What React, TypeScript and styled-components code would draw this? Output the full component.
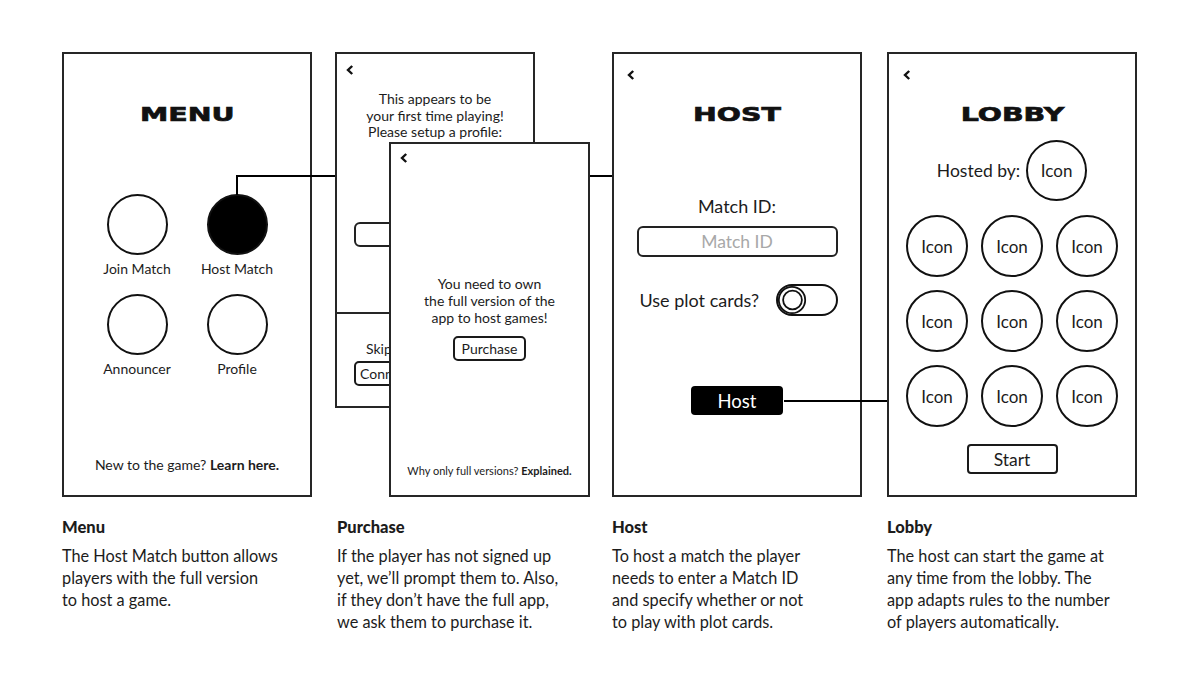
import React from 'react';
import styled, { createGlobalStyle } from 'styled-components';

const ink = '#1c1c1c';
const border = '#262626';

const GlobalStyle = createGlobalStyle`
  body {
    margin: 0;
    background: #ffffff;
    font-family: Lato, 'Open Sans', sans-serif;
    color: ${ink};
  }
`;

const Page = styled.div`
  position: relative;
  width: 1200px;
  height: 700px;
  box-sizing: border-box;
  padding: 52px 0 0 62px;
  overflow: hidden;
`;

const Row = styled.div`
  display: flex;
  gap: 25px;
`;

const Column = styled.div`
  display: flex;
  flex-direction: column;
  width: 250px;
`;

const Phone = styled.div<{ $w?: number; $h?: number }>`
  position: relative;
  box-sizing: border-box;
  width: ${(p) => p.$w ?? 250}px;
  height: ${(p) => p.$h ?? 445}px;
  border: 2px solid ${border};
  background: #fff;
  display: flex;
  flex-direction: column;
  align-items: center;
`;

const Stack = styled.div`
  position: relative;
  z-index: 2;
  width: 250px;
  height: 445px;
`;

const BackPhone = styled(Phone)`
  margin-left: -2px;
`;

const FrontPhone = styled(Phone)`
  position: absolute;
  left: 52px;
  top: 90px;
`;

const Back = styled.svg<{ $top: number; $left: number }>`
  align-self: flex-start;
  display: block;
  margin: ${(p) => p.$top}px 0 0 ${(p) => p.$left}px;
  flex-shrink: 0;
`;

const Title = styled.div<{ $mt: number }>`
  margin-top: ${(p) => p.$mt}px;
  height: 24px;
  line-height: 24px;
  font-family: 'DejaVu Sans', sans-serif;
  font-weight: 700;
  font-size: 20px;
  color: #111;
  -webkit-text-stroke: 0.7px #111;
  transform: scaleX(1.42);
`;

const IconGrid = styled.div`
  margin-top: 68px;
  display: grid;
  grid-template-columns: 100px 100px;
  row-gap: 17px;
`;

const MenuItem = styled.div`
  display: flex;
  flex-direction: column;
  align-items: center;
`;

const Circle = styled.div<{ $filled?: boolean; $size?: number }>`
  box-sizing: border-box;
  width: ${(p) => p.$size ?? 61}px;
  height: ${(p) => p.$size ?? 61}px;
  border-radius: 50%;
  border: 2px solid #111;
  background: ${(p) => (p.$filled ? '#000' : '#fff')};
  display: flex;
  align-items: center;
  justify-content: center;
  font-size: 17px;
  flex-shrink: 0;
`;

const ItemLabel = styled.div`
  margin-top: 6px;
  font-size: 14px;
  line-height: 16px;
  white-space: nowrap;
`;

const Footnote = styled.div<{ $size: number; $pb: number }>`
  margin-top: auto;
  padding-bottom: ${(p) => p.$pb}px;
  font-size: ${(p) => p.$size}px;
  line-height: ${(p) => p.$size + 3}px;
  white-space: nowrap;
  b {
    font-weight: 700;
  }
`;

const Message = styled.div<{ $mt: number; $lh: number }>`
  margin-top: ${(p) => p.$mt}px;
  font-size: 14px;
  line-height: ${(p) => p.$lh}px;
  text-align: center;
  white-space: nowrap;
`;

const FieldBox = styled.div`
  align-self: flex-start;
  margin: 81px 0 0 17px;
  box-sizing: border-box;
  width: 166px;
  height: 25px;
  border: 2px solid #222;
  border-radius: 6px;
`;

const SetupFooter = styled.div`
  margin-top: 65px;
  align-self: stretch;
  border-top: 2px solid ${border};
  padding: 26px 0 0 17px;
  display: flex;
  flex-direction: column;
  align-items: flex-start;
  gap: 4px;
  font-size: 14px;
  line-height: 17px;
`;

const SkipText = styled.div`
  padding-left: 12px;
  white-space: nowrap;
`;

const OutlineButton = styled.div<{ $w: number; $h: number; $mt?: number }>`
  box-sizing: border-box;
  margin-top: ${(p) => p.$mt ?? 0}px;
  width: ${(p) => p.$w}px;
  height: ${(p) => p.$h}px;
  border: 2px solid #1a1a1a;
  border-radius: 5px;
  display: flex;
  align-items: center;
  justify-content: center;
  white-space: nowrap;
`;

const SmallButton = styled(OutlineButton)`
  font-size: 14px;
`;

const LeftButton = styled(OutlineButton)`
  justify-content: flex-start;
  padding-left: 4px;
  font-size: 14px;
`;

const FieldLabel = styled.div`
  margin-top: 70px;
  font-size: 18px;
  line-height: 20px;
`;

const TextInput = styled.div`
  margin-top: 10px;
  box-sizing: border-box;
  width: 201px;
  height: 31px;
  border: 2px solid #222;
  border-radius: 6px;
  display: flex;
  align-items: center;
  justify-content: center;
  font-size: 17.5px;
  color: #a8a8a8;
`;

const ToggleRow = styled.div`
  margin-top: 27px;
  width: 201px;
  padding-left: 3px;
  box-sizing: border-box;
  height: 31px;
  display: flex;
  align-items: center;
  justify-content: space-between;
  font-size: 18px;
`;

const PrimaryButton = styled.div`
  margin-top: 71px;
  width: 92px;
  height: 29px;
  border-radius: 4px;
  background: #000;
  color: #fff;
  font-size: 18.5px;
  display: flex;
  align-items: center;
  justify-content: center;
`;

const HostedRow = styled.div`
  margin-top: 14px;
  display: flex;
  align-items: center;
  gap: 6px;
  font-size: 17.5px;
`;

const PlayerGrid = styled.div`
  margin-top: 14px;
  display: grid;
  grid-template-columns: repeat(3, 62px);
  gap: 13px;
`;

const StartButton = styled(OutlineButton)`
  font-size: 17.5px;
  border-radius: 4px;
`;

const Caption = styled.div`
  margin-top: 21px;
`;

const CaptionTitle = styled.div`
  font-size: 16.5px;
  line-height: 18px;
  font-weight: 900;
`;

const CaptionBody = styled.div`
  margin-top: 9px;
  font-size: 16.3px;
  line-height: 22px;
  white-space: nowrap;
`;

const Connectors = styled.svg`
  position: absolute;
  left: 0;
  top: 0;
  z-index: 1;
  pointer-events: none;
`;

const Chevron = ({ top, left }: { top: number; left: number }) => (
  <Back $top={top} $left={left} width="8" height="10" viewBox="0 0 8 10">
    <polyline points="6.2,1 2,5 6.2,9" fill="none" stroke="#111" strokeWidth="2.4" />
  </Back>
);

const Toggle = () => (
  <svg width="62" height="32" viewBox="0 0 62 32">
    <rect x="1" y="1" width="60" height="30" rx="15" fill="#fff" stroke="#111" strokeWidth="2" />
    <circle cx="16" cy="16" r="13.2" fill="none" stroke="#111" strokeWidth="1.8" />
    <circle cx="16.5" cy="16" r="9.4" fill="none" stroke="#111" strokeWidth="1.8" />
  </svg>
);

const captions = [
  { title: 'Menu', lines: ['The Host Match button allows', 'players with the full version', 'to host a game.'] },
  {
    title: 'Purchase',
    lines: ['If the player has not signed up', 'yet, we\u2019ll prompt them to. Also,', 'if they don\u2019t have the full app,', 'we ask them to purchase it.'],
  },
  {
    title: 'Host',
    lines: ['To host a match the player', 'needs to enter a Match ID', 'and specify whether or not', 'to play with plot cards.'],
  },
  {
    title: 'Lobby',
    lines: ['The host can start the game at', 'any time from the lobby. The', 'app adapts rules to the number', 'of players automatically.'],
  },
];

const CaptionBlock = ({ index }: { index: number }) => (
  <Caption>
    <CaptionTitle>{captions[index].title}</CaptionTitle>
    <CaptionBody>
      {captions[index].lines.map((l) => (
        <div key={l}>{l}</div>
      ))}
    </CaptionBody>
  </Caption>
);

const menuItems = [
  { label: 'Join Match' },
  { label: 'Host Match', active: true },
  { label: 'Announcer' },
  { label: 'Profile' },
];

const App = () => {
  return (
    <>
      <GlobalStyle />
      <Page>
        <Connectors width="1200" height="700" viewBox="0 0 1200 700">
          <polyline points="237,195 237,176 612,176" fill="none" stroke="#000" strokeWidth="2" />
          <line x1="784" y1="401" x2="887" y2="401" stroke="#000" strokeWidth="2" />
        </Connectors>
        <Row>
          <Column>
            <Phone>
              <Title $mt={48}>MENU</Title>
              <IconGrid>
                {menuItems.map((m) => (
                  <MenuItem key={m.label}>
                    <Circle $filled={m.active} />
                    <ItemLabel>{m.label}</ItemLabel>
                  </MenuItem>
                ))}
              </IconGrid>
              <Footnote $size={14} $pb={22}>
                New to the game? <b>Learn here.</b>
              </Footnote>
            </Phone>
            <CaptionBlock index={0} />
          </Column>

          <Column>
            <Stack>
              <BackPhone $w={200} $h={356}>
                <Chevron top={11} left={9} />
                <Message $mt={16} $lh={16.5}>
                  This appears to be
                  <br />
                  your first time playing!
                  <br />
                  Please setup a profile:
                </Message>
                <FieldBox />
                <SetupFooter>
                  <SkipText>Skip for now</SkipText>
                  <LeftButton $w={150} $h={25}>
                    Connect account
                  </LeftButton>
                </SetupFooter>
              </BackPhone>
              <FrontPhone $w={201} $h={355}>
                <Chevron top={9} left={9} />
                <Message $mt={112} $lh={17}>
                  You need to own
                  <br />
                  the full version of the
                  <br />
                  app to host games!
                </Message>
                <SmallButton $w={73} $h={25} $mt={10}>
                  Purchase
                </SmallButton>
                <Footnote $size={11} $pb={17}>
                  Why only full versions? <b>Explained.</b>
                </Footnote>
              </FrontPhone>
            </Stack>
            <CaptionBlock index={1} />
          </Column>

          <Column>
            <Phone>
              <Chevron top={16} left={13} />
              <Title $mt={22}>HOST</Title>
              <FieldLabel>Match ID:</FieldLabel>
              <TextInput>Match ID</TextInput>
              <ToggleRow>
                <span>Use plot cards?</span>
                <Toggle />
              </ToggleRow>
              <PrimaryButton>Host</PrimaryButton>
            </Phone>
            <CaptionBlock index={2} />
          </Column>

          <Column>
            <Phone>
              <Chevron top={16} left={14} />
              <Title $mt={22}>LOBBY</Title>
              <HostedRow>
                <span>Hosted by:</span>
                <Circle>Icon</Circle>
              </HostedRow>
              <PlayerGrid>
                {Array.from({ length: 9 }).map((_, i) => (
                  <Circle key={i} $size={62}>
                    Icon
                  </Circle>
                ))}
              </PlayerGrid>
              <StartButton $w={91} $h={30} $mt={17}>
                Start
              </StartButton>
            </Phone>
            <CaptionBlock index={3} />
          </Column>
        </Row>
      </Page>
    </>
  );
};

export default App;
